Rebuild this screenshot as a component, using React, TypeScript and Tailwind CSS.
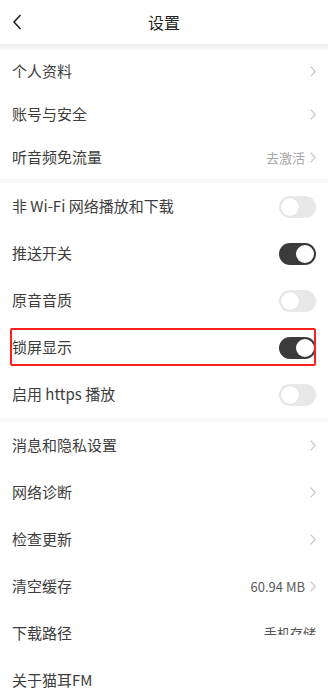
import { ReactNode } from "react"

type Row =
  | { kind: "link"; label: string; value?: string; dark?: boolean }
  | { kind: "toggle"; label: string; on: boolean; marked?: boolean }
  | { kind: "clipped"; label: string; value: string }
  | { kind: "plain"; label: string }

const first: Row[] = [
  { kind: "link", label: "个人资料" },
  { kind: "link", label: "账号与安全" },
  { kind: "link", label: "听音频免流量", value: "去激活" },
]

const second: Row[] = [
  { kind: "toggle", label: "非 Wi-Fi 网络播放和下载", on: false },
  { kind: "toggle", label: "推送开关", on: true },
  { kind: "toggle", label: "原音音质", on: false },
  { kind: "toggle", label: "锁屏显示", on: true, marked: true },
  { kind: "toggle", label: "启用 https 播放", on: false },
]

const third: Row[] = [
  { kind: "link", label: "消息和隐私设置" },
  { kind: "link", label: "网络诊断" },
  { kind: "link", label: "检查更新" },
  { kind: "link", label: "清空缓存", value: "60.94 MB", dark: true },
  { kind: "clipped", label: "下载路径", value: "手机存储" },
  { kind: "plain", label: "关于猫耳FM" },
]

function Chevron() {
  return (
    <svg width="6" height="11" viewBox="0 0 6 11" className="ml-[5px]">
      <polyline points="0.7,0.7 5.2,5.5 0.7,10.3" fill="none" stroke="#c4c4c4" strokeWidth="1.2" />
    </svg>
  )
}

function Toggle({ on }: { on: boolean }) {
  return (
    <div
      className={
        on
          ? "flex h-[22px] w-[37px] items-center justify-end rounded-full bg-[#3b3b3b] px-[2px]"
          : "flex h-[22px] w-[37px] items-center justify-start rounded-full bg-[#e8e8e8] px-[2px]"
      }
    >
      <div className="h-[18px] w-[18px] rounded-full bg-white shadow-[0_0_1px_rgba(0,0,0,0.15)]" />
    </div>
  )
}

function Item({ row, h }: { row: Row; h: string }) {
  let right: ReactNode = null
  if (row.kind === "link") {
    right = (
      <div className="flex items-center">
        {row.value && (
          <span className={row.dark ? "text-[13px] text-[#5a5a5a]" : "text-[13px] text-[#a6a6a6]"}>
            {row.value}
          </span>
        )}
        <Chevron />
      </div>
    )
  } else if (row.kind === "toggle") {
    right = <Toggle on={row.on} />
  } else if (row.kind === "clipped") {
    // the reference shows this value cut off halfway, so keep the clip
    right = (
      <div className="mb-[6px] h-[9px] overflow-hidden">
        <span className="block text-[13px] leading-[17px] text-[#555] -mt-[2px]">{row.value}</span>
      </div>
    )
  }

  return (
    <div className={`relative flex items-center justify-between pl-[12px] pr-[12px] ${h}`}>
      <span className="text-[15px] text-[#3d3d3d]">{row.label}</span>
      {right}
      {"marked" in row && row.marked && (
        <div className="pointer-events-none absolute left-[10px] right-[12px] top-[4px] bottom-[5px] rounded-[2px] border-2 border-[#ff1f1f]" />
      )}
    </div>
  )
}

function Band({ h }: { h: string }) {
  return <div className={`${h} bg-[#f8f8f8]`} />
}

export default function App() {
  return (
    <div
      className="h-[699px] w-[328px] overflow-hidden bg-white"
      style={{ fontFamily: '"Noto Sans CJK SC", "Noto Sans", sans-serif' }}
    >
      <div className="relative flex h-[44px] items-center justify-center">
        <svg width="10" height="16" viewBox="0 0 10 16" className="absolute left-[12px] top-[14px]">
          <polyline points="8.5,1 2,8 8.5,15" fill="none" stroke="#222" strokeWidth="1.6" />
        </svg>
        <span className="text-[16px] text-[#222]">设置</span>
      </div>
      <div className="h-[6px] bg-gradient-to-b from-[#efefef] to-[#f8f8f8]" />
      {first.map((r) => (
        <Item key={r.label} row={r} h="h-[43px]" />
      ))}
      <Band h="h-[4px]" />
      {second.map((r) => (
        <Item key={r.label} row={r} h="h-[47px]" />
      ))}
      <Band h="h-[4px]" />
      {third.map((r) => (
        <Item key={r.label} row={r} h="h-[47px]" />
      ))}
    </div>
  )
}
